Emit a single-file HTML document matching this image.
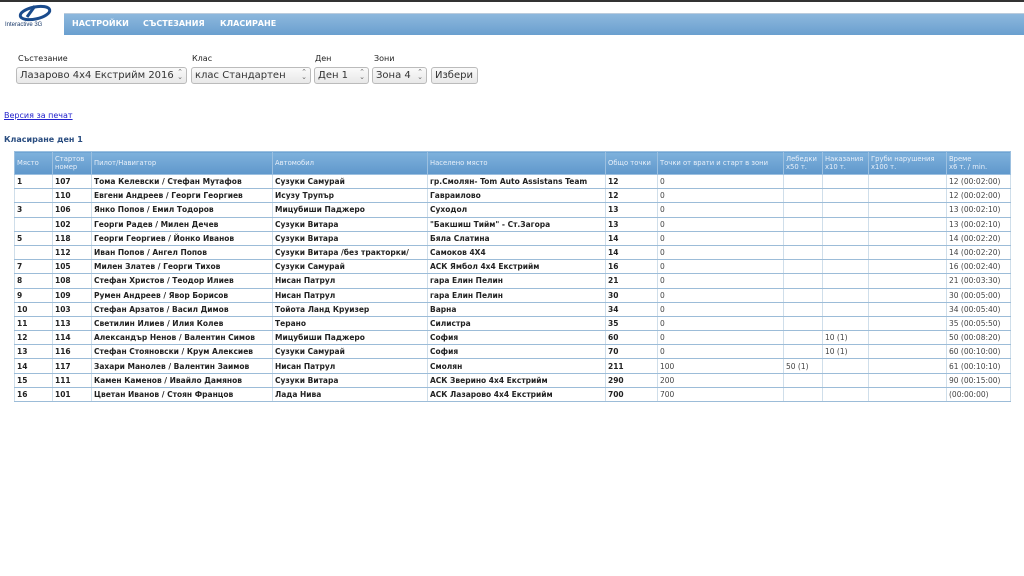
<!DOCTYPE html>
<html><head><meta charset="utf-8"><style>
*{margin:0;padding:0;box-sizing:border-box}
body{width:1024px;height:576px;background:#fff;font-family:"DejaVu Sans","Liberation Sans",sans-serif;position:relative;overflow:hidden}
.top{position:absolute;left:0;top:0;width:1024px;height:2px;background:#333}
.logo{position:absolute;left:3px;top:3px;width:60px;height:26px}
.nav{position:absolute;left:64px;top:13px;width:960px;height:22px;background:linear-gradient(#8db8dd,#6a9fcf);border-top:1px solid #bcd;}
.nav span{position:absolute;top:5px;color:#fff;font-size:8px;font-weight:bold}
.lbl{position:absolute;top:54px;font-size:8px;color:#222}
.sel{position:absolute;top:67px;height:17px;border:1px solid #bbb;border-radius:3px;background:linear-gradient(#fafafa,#e8e8e8);font-size:10px;color:#333;padding:1px 3px;line-height:14px;white-space:nowrap;overflow:hidden}
.sel i{position:absolute;right:3px;top:2px;font-style:normal;font-size:7px;color:#666;line-height:5px}
a.pr{position:absolute;left:4px;top:111px;font-size:8px;color:#22c;text-decoration:underline}
.h{position:absolute;left:4px;top:135px;font-size:8px;font-weight:bold;color:#2a4d80}
table{position:absolute;left:14px;top:151px;width:996px;border-collapse:collapse;font-size:7.5px;color:#222;table-layout:fixed}
th{background:linear-gradient(#7eb1dc,#5f97cb);color:#e8f0fa;font-weight:normal;text-align:left;padding:0 2px;height:23px;border:1px solid #9cc0e0;font-size:6.8px;line-height:8.5px;vertical-align:middle;white-space:nowrap;overflow:hidden}
td{height:14.2px;padding:0 2px;border:1px solid #cfdeea;border-bottom:1px solid #9cbcd8;white-space:nowrap;overflow:hidden}
td.b{font-weight:bold}
td.n{color:#444}
</style></head><body>
<div class="top"></div>
<svg class="logo" viewBox="0 0 60 26"><ellipse cx="32" cy="10" rx="15" ry="6" fill="none" stroke="#1a4b8c" stroke-width="3" transform="rotate(-12 32 10)"/><path d="M24 14 L32 3" stroke="#1a4b8c" stroke-width="3"/><text x="2" y="23" font-size="6" fill="#1a3a6a" font-family="Liberation Sans">Interactive 3G</text></svg>
<div class="nav"><span style="left:8px">НАСТРОЙКИ</span><span style="left:79px">СЪСТЕЗАНИЯ</span><span style="left:156px">КЛАСИРАНЕ</span></div>
<div class="lbl" style="left:18px">Състезание</div>
<div class="lbl" style="left:192px">Клас</div>
<div class="lbl" style="left:315px">Ден</div>
<div class="lbl" style="left:374px">Зони</div>
<div class="sel" style="left:16px;width:171px">Лазарово 4х4 Екстрийм 2016<i>⌃<br>⌄</i></div>
<div class="sel" style="left:191px;width:120px">клас Стандартен<i>⌃<br>⌄</i></div>
<div class="sel" style="left:314px;width:55px">Ден 1<i>⌃<br>⌄</i></div>
<div class="sel" style="left:372px;width:55px">Зона 4<i>⌃<br>⌄</i></div>
<div class="sel" style="left:431px;width:47px">Избери</div>
<a class="pr">Версия за печат</a>
<div class="h">Класиране ден 1</div>
<table>
<colgroup><col style="width:38px"><col style="width:39px"><col style="width:181px"><col style="width:155px"><col style="width:178px"><col style="width:52px"><col style="width:126px"><col style="width:39px"><col style="width:46px"><col style="width:78px"><col style="width:64px"></colgroup>
<tr><th>Място</th><th>Стартов<br>номер</th><th>Пилот/Навигатор</th><th>Автомобил</th><th>Населено място</th><th>Общо точки</th><th>Точки от врати и старт в зони</th><th>Лебедки<br>x50 т.</th><th>Наказания<br>x10 т.</th><th>Груби нарушения<br>x100 т.</th><th>Време<br>x6 т. / min.</th></tr>
<tr><td class="b">1</td><td class="b">107</td><td class="b">Тома Келевски / Стефан Мутафов</td><td class="b">Сузуки Самурай</td><td class="b">гр.Смолян- Tom Auto Assistans Team</td><td class="b">12</td><td class="n">0</td><td></td><td></td><td></td><td class="n">12 (00:02:00)</td></tr>
<tr><td></td><td class="b">110</td><td class="b">Евгени Андреев / Георги Георгиев</td><td class="b">Исузу Трупър</td><td class="b">Гавраилово</td><td class="b">12</td><td class="n">0</td><td></td><td></td><td></td><td class="n">12 (00:02:00)</td></tr>
<tr><td class="b">3</td><td class="b">106</td><td class="b">Янко Попов / Емил Тодоров</td><td class="b">Мицубиши Паджеро</td><td class="b">Суходол</td><td class="b">13</td><td class="n">0</td><td></td><td></td><td></td><td class="n">13 (00:02:10)</td></tr>
<tr><td></td><td class="b">102</td><td class="b">Георги Радев / Милен Дечев</td><td class="b">Сузуки Витара</td><td class="b">"Бакшиш Тийм" - Ст.Загора</td><td class="b">13</td><td class="n">0</td><td></td><td></td><td></td><td class="n">13 (00:02:10)</td></tr>
<tr><td class="b">5</td><td class="b">118</td><td class="b">Георги Георгиев / Йонко Иванов</td><td class="b">Сузуки Витара</td><td class="b">Бяла Слатина</td><td class="b">14</td><td class="n">0</td><td></td><td></td><td></td><td class="n">14 (00:02:20)</td></tr>
<tr><td></td><td class="b">112</td><td class="b">Иван Попов / Ангел Попов</td><td class="b">Сузуки Витара /без тракторки/</td><td class="b">Самоков 4Х4</td><td class="b">14</td><td class="n">0</td><td></td><td></td><td></td><td class="n">14 (00:02:20)</td></tr>
<tr><td class="b">7</td><td class="b">105</td><td class="b">Милен Златев / Георги Тихов</td><td class="b">Сузуки Самурай</td><td class="b">АСК Ямбол 4х4 Екстрийм</td><td class="b">16</td><td class="n">0</td><td></td><td></td><td></td><td class="n">16 (00:02:40)</td></tr>
<tr><td class="b">8</td><td class="b">108</td><td class="b">Стефан Христов / Теодор Илиев</td><td class="b">Нисан Патрул</td><td class="b">гара Елин Пелин</td><td class="b">21</td><td class="n">0</td><td></td><td></td><td></td><td class="n">21 (00:03:30)</td></tr>
<tr><td class="b">9</td><td class="b">109</td><td class="b">Румен Андреев / Явор Борисов</td><td class="b">Нисан Патрул</td><td class="b">гара Елин Пелин</td><td class="b">30</td><td class="n">0</td><td></td><td></td><td></td><td class="n">30 (00:05:00)</td></tr>
<tr><td class="b">10</td><td class="b">103</td><td class="b">Стефан Арзатов / Васил Димов</td><td class="b">Тойота Ланд Круизер</td><td class="b">Варна</td><td class="b">34</td><td class="n">0</td><td></td><td></td><td></td><td class="n">34 (00:05:40)</td></tr>
<tr><td class="b">11</td><td class="b">113</td><td class="b">Светилин Илиев / Илия Колев</td><td class="b">Терано</td><td class="b">Силистра</td><td class="b">35</td><td class="n">0</td><td></td><td></td><td></td><td class="n">35 (00:05:50)</td></tr>
<tr><td class="b">12</td><td class="b">114</td><td class="b">Александър Ненов / Валентин Симов</td><td class="b">Мицубиши Паджеро</td><td class="b">София</td><td class="b">60</td><td class="n">0</td><td></td><td class="n">10 (1)</td><td></td><td class="n">50 (00:08:20)</td></tr>
<tr><td class="b">13</td><td class="b">116</td><td class="b">Стефан Стояновски / Крум Алексиев</td><td class="b">Сузуки Самурай</td><td class="b">София</td><td class="b">70</td><td class="n">0</td><td></td><td class="n">10 (1)</td><td></td><td class="n">60 (00:10:00)</td></tr>
<tr><td class="b">14</td><td class="b">117</td><td class="b">Захари Манолев / Валентин Заимов</td><td class="b">Нисан Патрул</td><td class="b">Смолян</td><td class="b">211</td><td class="n">100</td><td class="n">50 (1)</td><td></td><td></td><td class="n">61 (00:10:10)</td></tr>
<tr><td class="b">15</td><td class="b">111</td><td class="b">Камен Каменов / Ивайло Дамянов</td><td class="b">Сузуки Витара</td><td class="b">АСК Зверино 4х4 Екстрийм</td><td class="b">290</td><td class="n">200</td><td></td><td></td><td></td><td class="n">90 (00:15:00)</td></tr>
<tr><td class="b">16</td><td class="b">101</td><td class="b">Цветан Иванов / Стоян Францов</td><td class="b">Лада Нива</td><td class="b">АСК Лазарово 4х4 Екстрийм</td><td class="b">700</td><td class="n">700</td><td></td><td></td><td></td><td class="n">(00:00:00)</td></tr>
</table>
</body></html>
